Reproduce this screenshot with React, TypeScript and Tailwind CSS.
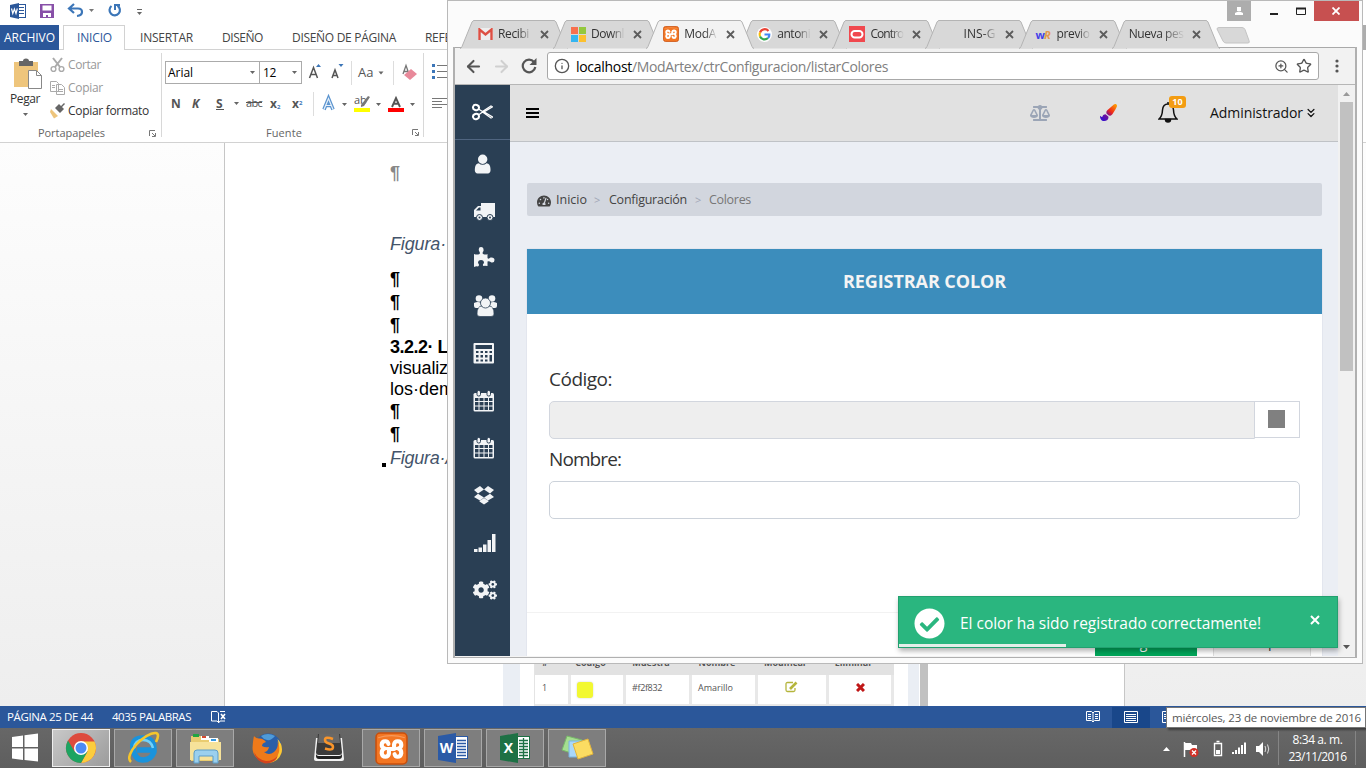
import React, { useLayoutEffect, useRef } from "react";
import { FaCogs, FaBalanceScale, FaTachometerAlt, FaCheckCircle, FaPaintBrush } from "react-icons/fa";
import { ArrowLeft, ArrowRight, ChevronsDown, ZoomIn, Star, Info } from "lucide-react";

/* One line of text whose tracking is tuned so that it fills w pixels. */
function T({ w, className = "", children }: { w: number; className?: string; children: string }) {
  const ref = useRef<HTMLSpanElement>(null);
  useLayoutEffect(() => {
    const el = ref.current;
    if (!el) return;
    el.style.letterSpacing = "0px";
    const natural = el.getBoundingClientRect().width;
    el.style.letterSpacing = (w - natural) / children.length + "px";
  }, [w, children]);
  return (
    <span ref={ref} className={"inline-block shrink-0 whitespace-pre " + className}>
      {children}
    </span>
  );
}

function Caret({ className = "" }: { className?: string }) {
  return (
    <svg className={"shrink-0 " + className} width="5" height="3" viewBox="0 0 5 3">
      <path d="M0 0h5L2.500 3z" fill="#666" />
    </svg>
  );
}

function Launcher({ className = "" }: { className?: string }) {
  return (
    <svg className={"shrink-0 " + className} width="7" height="7" viewBox="0 0 7 7" fill="none" stroke="#777">
      <path d="M.5 6V.5H6M3 3l3 3M6.500 3v3.500H3" />
    </svg>
  );
}

/* ---------- Word ---------- */

function QuickAccess() {
  return (
    <div className="flex h-[25px] shrink-0 items-start bg-white">
      <svg width="150" height="22" viewBox="0 0 150 22">
        <rect x="16.500" y="4.500" width="9" height="13" fill="#fff" stroke="#2b579a" />
        <path d="M19 7.500h5M19 10.500h5M19 13.500h5" stroke="#2b579a" />
        <path d="M10 5l9-2v16l-9-2z" fill="#2b579a" />
        <path d="M11.500 8.500l1.300 5 1.600-4.500 1.600 4.500 1.300-5" fill="none" stroke="#fff" strokeWidth="1.200" />
        <path d="M40 4h14v14H40z" fill="#8850a8" />
        <path d="M42.500 5.500h9v5h-9zM43 13h8v4h-3v-2h-2v2h-3z" fill="#fff" />
        <path d="M74 4l-5 4.500 5 4.500M70 8.500h8q4 0 4 3.500t-5 4" fill="none" stroke="#3c76b8" strokeWidth="2.200" />
        <path d="M89 9h5l-2.500 3z" fill="#777" />
        <path d="M111.500 6a5.200 5.200 0 1 0 6 -.3" fill="none" stroke="#3c76b8" strokeWidth="2.200" />
        <path d="M120 5h-5v5" fill="none" stroke="#3c76b8" strokeWidth="2" />
        <path d="M137 9.500h5" stroke="#666" />
        <path d="M137 12h5l-2.500 3z" fill="#666" />
      </svg>
    </div>
  );
}

function RibbonTabs() {
  return (
    <div className="flex h-[25px] shrink-0 items-stretch border-b border-[#d2d2d2] text-[12px] leading-[25px] text-[#444]">
      <div className="h-[25px] w-[59px] bg-[#2b579a] pl-1 text-white"><T w={51}>ARCHIVO</T></div>
      <div className="ml-1 h-[25px] w-[62px] border-x border-t border-[#d2d2d2] bg-white pl-[13px] leading-[24px] text-[#2b579a]"><T w={35}>INICIO</T></div>
      <T w={53} className="ml-[15px]">INSERTAR</T>
      <T w={41} className="ml-[29px]">DISEÑO</T>
      <T w={104} className="ml-[29px]">DISEÑO DE PÁGINA</T>
      <T w={72} className="ml-[29px]">REFERENCIAS</T>
    </div>
  );
}

function Clipboard() {
  return (
    <div className="flex h-full w-[161px] shrink-0 flex-col">
      <div className="flex h-[73px] text-[12px] text-[#444]">
        <div className="flex w-[50px] flex-col items-center">
          <svg width="32" height="32" viewBox="0 0 32 32" className="mt-[7px] ml-1">
            <path d="M3 5h24v25H3z" fill="#eec57c" />
            <path d="M8 4h4q0-2.500 3-2.500T18 4h4v5H8z" fill="#666" />
            <path d="M17.500 13.500h8l5 5v13h-13z" fill="#fff" stroke="#888" />
            <path d="M25.500 13.500v5h5" fill="none" stroke="#888" />
          </svg>
          <T w={30} className="leading-[20px] text-[#333]">Pegar</T>
          <Caret className="mt-[4px]" />
        </div>
        <div className="flex flex-col pt-[3px]">
          <div className="flex h-[23px] items-center gap-[3px] text-[#999]">
            <svg width="15" height="16" viewBox="0 0 15 16" fill="none" stroke="#aaa" strokeWidth="1.400">
              <path d="M3 1l7 9M12 1L5 10" strokeWidth="2" /><circle cx="3.500" cy="12" r="2.400" /><circle cx="11.500" cy="12" r="2.400" />
            </svg>
            <T w={33}>Cortar</T>
          </div>
          <div className="flex h-[23px] items-center gap-[3px] text-[#999]">
            <svg width="15" height="16" viewBox="0 0 15 16" fill="#fff" stroke="#aaa">
              <path d="M.5 1.500h6l2 2v8h-8zM6.500 4.500h5l3 3v7h-8z" /><path d="M2 5.500h3M2 7.500h3M8 9.500h5M8 11.500h5" />
            </svg>
            <T w={35}>Copiar</T>
          </div>
          <div className="flex h-[23px] items-center gap-[3px] text-[#333]">
            <svg width="15" height="16" viewBox="0 0 15 16">
              <path d="M1 6l7 7-4 2.500L0 9z" fill="#eec57c" /><path d="M5 5l5 5 4-4-2-2 3-3-1-1-3 3-2-2z" fill="#666" />
            </svg>
            <T w={81}>Copiar formato</T>
          </div>
        </div>
      </div>
      <div className="flex items-center pl-[38px] text-[11px] leading-[22px] text-[#666]">
        <T w={67}>Portapapeles</T>
        <Launcher className="ml-[44px]" />
      </div>
    </div>
  );
}

function FontGroup() {
  return (
    <div className="flex h-[84px] w-[263px] shrink-0 flex-col border-x border-[#d8d8d8] pl-[3px] text-[#555]">
      <div className="mt-[8px] flex h-[23px] shrink-0 items-center">
        <div className="flex h-[23px] w-[95px] shrink-0 items-center border border-[#ababab] bg-white pl-[2px] text-[12px] text-black">
          <T w={25}>Arial</T><Caret className="ml-auto mr-[4px]" />
        </div>
        <div className="-ml-px flex h-[23px] w-[43px] shrink-0 items-center border border-[#ababab] bg-white pl-[3px] text-[12px] text-black">
          <T w={13}>12</T><Caret className="ml-auto mr-[4px]" />
        </div>
        <svg width="121" height="24" viewBox="0 0 121 24" className="shrink-0">
          <g fill="none" stroke="#555" strokeWidth="1.500">
            <path d="M7.500 17l4-10.500 4 10.500M9 13.500h5.500M30 17l3-8 3 8M31 14.500h4" />
          </g>
          <path d="M14 6l2.500-3L19 6zM36.500 3h5L39 6z" fill="#3c76b8" />
          <path d="M49.500 0v24M91.500 0v24" stroke="#ddd" />
          <path d="M76.500 10.500h5l-2.500 3z" fill="#666" />
          <path d="M101 13l3-8.500 3 8.500M102 10.500h4" fill="none" stroke="#777" strokeWidth="1.300" />
          <path d="M102 14l7-6 6 5-7 6z" fill="#e8899a" />
          <text x="56" y="16" fontSize="13" fill="#555">Aa</text>
        </svg>
      </div>
      <div className="mt-[7px] flex h-[25px] shrink-0 items-center text-[12px]">
        <T w={11} className="ml-[6px] font-bold">N</T>
        <T w={9} className="ml-[10px] font-bold italic">K</T>
        <T w={8} className="ml-[15px] font-bold underline">S</T>
        <Caret className="ml-[10px]" />
        <T w={16} className="ml-[7px] text-[11px] line-through">abc</T>
        <span className="ml-[8px] w-[13px] shrink-0 font-bold">x<sub className="text-[6px] text-[#3c76b8]">2</sub></span>
        <span className="ml-[9px] w-[13px] shrink-0 font-bold">x<sup className="text-[6px] text-[#3c76b8]">2</sup></span>
        <svg width="106" height="26" viewBox="0 0 106 26" className="ml-[5px] shrink-0">
          <path d="M3.500 1v24" stroke="#ddd" />
          <path d="M14 18.500l4.500-11 4.500 11M16 14.500h5.500" fill="none" stroke="#5b94cf" strokeWidth="3.600" />
          <path d="M14 18.500l4.500-11 4.500 11M16 14.500h5.500" fill="none" stroke="#e6f0fa" strokeWidth="1.200" />
          <path d="M32 12h5l-2.500 3zM66 12h5l-2.500 3zM100 12h5l-2.500 3z" fill="#666" />
          <path d="M44 17h16v4H44z" fill="#ff0" />
          <text x="44" y="13" fontSize="11" fill="#555">ab</text>
          <path d="M60 6l-6 9-3 1v-2l7-9z" fill="#777" />
          <path d="M78 17h16v4H78z" fill="#f00" />
          <path d="M82 16l4-9 4 9M83.500 12.800h5" fill="none" stroke="#555" strokeWidth="1.900" />
        </svg>
      </div>
      <div className="mt-[8px] flex shrink-0 items-center pl-[101px] text-[11px] leading-[17px] text-[#666]">
        <T w={36}>Fuente</T><Launcher className="ml-[110px]" />
      </div>
    </div>
  );
}

function Ribbon() {
  return (
    <div className="flex h-[93px] shrink-0 items-start border-b border-[#d2d2d2] bg-white">
      <Clipboard />
      <div className="pt-[3px]"><FontGroup /></div>
      <svg width="24" height="92" viewBox="0 0 24 92">
        <path d="M8 14h3v3H8zM8 20h3v3H8zM8 26h3v3H8z" fill="#3c76b8" />
        <path d="M13 15.500h10M13 21.500h10M13 27.500h10M8 48.500h15M8 51.500h10M8 54.500h15M8 57.500h10" stroke="#777" />
      </svg>
    </div>
  );
}

const cell = "border-r-[3px] border-b-2 border-[#e8e8e8]";

function EmbeddedTable() {
  return (
    <div className="flex h-[56px] w-[426px] shrink-0 bg-white text-[9px] text-[#555]">
      <div className="w-[17px] shrink-0 bg-[#eaeef4]" />
      <div className="ml-[14px] grid w-[360px] shrink-0 grid-cols-[36px_55px_66px_66px_71px_65px] grid-rows-[25px_31px] border-l border-[#e4e4e4]">
        {["#", "Código", "Muestra", "Nombre", "Modificar", "Eliminar"].map((h) => (
          <div key={h} className="bg-[#e2e2e2] pt-[7px] pr-[16px] text-center text-[9px] leading-[12px] font-bold">{h}</div>
        ))}
        <div className={cell + " pt-[5px] pl-[7px]"}>1</div>
        <div className={cell + " pt-[7px] pl-[6px]"}><div className="h-4 w-4 rounded-[3px] bg-[#f2f832] shadow-[0_0_2px_#ccc]" /></div>
        <div className={cell + " pt-[5px] pl-[6px]"}><T w={30}>#f2f832</T></div>
        <div className={cell + " pt-[5px] pl-[6px]"}><T w={35}>Amarillo</T></div>
        <div className={cell + " pt-[6px] pl-[27px]"}>
          <svg width="13" height="12" viewBox="0 0 13 12" fill="none" stroke="#b5b53c" strokeWidth="1.300">
            <path d="M8 1.500H2.500q-1.500 0-1.500 1.500v6q0 1.500 1.500 1.500h6q1.500 0 1.500-1.500V7" /><path d="M5 8l6.500-6.500" strokeWidth="2.600" />
          </svg>
        </div>
        <div className={cell + " pt-[8px] pl-[27px]"}>
          <svg width="9" height="9" viewBox="0 0 9 9" stroke="#c01818" strokeWidth="3"><path d="M1 1l7 7M8 1L1 8" /></svg>
        </div>
      </div>
      <div className="ml-[14px] w-[11px] shrink-0 bg-[#eaeef4]" />
      <div className="ml-px w-[8px] shrink-0 bg-[#c1c1c1]" />
    </div>
  );
}

function WordDocument() {
  return (
    <div className="flex h-[563px] shrink-0 bg-[linear-gradient(#fdfdfd,#eeeeee)]">
      <div className="relative ml-[224px] flex w-[901px] flex-col border-x border-[#c6c6c6] bg-white pl-[165px] font-['Liberation_Sans',sans-serif] text-[18px] leading-[22px] text-black">
        <p className="mt-[19px] font-bold text-[#888]">¶</p>
        <p className="mt-[49px] text-[#44546a] italic"><T w={56}>Figura·</T></p>
        <p className="mt-[13px] leading-[23px] font-bold">¶</p>
        <p className="leading-[23px] font-bold">¶</p>
        <p className="leading-[23px] font-bold">¶</p>
        <p className="leading-[21px] font-bold"><T w={58}>3.2.2· L</T></p>
        <p className="leading-[21px]"><T w={58}>visualiz</T></p>
        <p className="leading-[21px]"><T w={64}>los·dem</T></p>
        <p className="leading-[23px] font-bold">¶</p>
        <p className="leading-[23px] font-bold">¶</p>
        <p className="mt-px text-[#44546a] italic"><T w={67}>Figura·A</T></p>
        <div className="absolute top-[320px] left-[157px] h-[4px] w-[4px] bg-black" />
        <div className="mt-auto ml-[113px] font-['Open_Sans',sans-serif] leading-[16px]"><EmbeddedTable /></div>
      </div>
    </div>
  );
}

function WordStatus() {
  return (
    <div className="flex h-[22px] shrink-0 items-center bg-[#2b579a] pl-[7px] text-[11.500px] text-white">
      <T w={86}>PÁGINA 25 DE 44</T>
      <T w={79} className="ml-[19px]">4035 PALABRAS</T>
      <svg width="16" height="14" viewBox="0 0 16 14" className="ml-[20px] shrink-0" fill="none" stroke="#fff">
        <path d="M7.500 12.500L6 11H.5V1.500H6l1.500 1.500v10L9 11h5M9 1.500h5" /><path d="M10 4l4 5M14 4l-4 5" strokeWidth="1.600" />
      </svg>
      <svg width="14" height="12" viewBox="0 0 14 12" className="ml-[859px] shrink-0" fill="none" stroke="#fff">
        <path d="M.5.5h5L7 2l1.500-1.500h5v9h-5L7 11 5.500 9.500h-5zM7 2v9M2 3.500h3M2 5.500h3M2 7.500h3M9 3.500h3M9 5.500h3M9 7.500h3" />
      </svg>
      <div className="ml-[12px] flex h-[21px] w-[38px] shrink-0 items-center justify-center bg-[#19478a]">
        <svg width="14" height="12" viewBox="0 0 14 12" fill="none" stroke="#fff"><path d="M.5.500h13v11H.5zM2 3.500h10M2 5.500h10M2 7.500h10M2 9.500h10" /></svg>
      </div>
      <svg width="14" height="12" viewBox="0 0 14 12" className="ml-[12px] shrink-0" fill="none" stroke="#fff"><path d="M.5.500h13v11H.5zM2 3.500h10M2 5.500h10M2 7.500h10" /></svg>
    </div>
  );
}

/* ---------- Taskbar ---------- */

function TaskButton({ active = false, plain = false, children }: { active?: boolean; plain?: boolean; children: React.ReactNode }) {
  const look = plain
    ? ""
    : active
      ? "border border-[#eeeeee] bg-[linear-gradient(135deg,#c8c8c8,#9c9c9c)]"
      : "border border-[#a8a8a8] bg-[#7e7e7e]";
  return <div className={"flex h-[38px] w-[58px] shrink-0 items-center justify-center " + look}>{children}</div>;
}

function OfficeIcon({ letter, color, cells }: { letter: string; color: string; cells: string }) {
  return (
    <svg width="32" height="32" viewBox="0 0 32 32">
      <rect x="16.500" y="4.500" width="14" height="22" fill="#fff" stroke={color} />
      <path d={cells} stroke={color} strokeWidth="1.300" />
      <path d="M1 4l18-3v30L1 28z" fill={color} />
      <text x="9.500" y="21" textAnchor="middle" fontSize="14" fontWeight="bold" fill="#fff">{letter}</text>
    </svg>
  );
}

function Xampp({ size }: { size: number }) {
  return (
    <svg width={size} height={size} viewBox="0 0 32 32" className="shrink-0">
      <rect x="1" y="1" width="30" height="30" rx="4" fill="#f37623" stroke="#c94f0c" strokeWidth="1.500" />
      <path d="M3 5q13-4 26 0v1q-13-4-26 0z" fill="#fbb380" opacity=".6" />
      <g fill="none" stroke="#fff" strokeWidth="4" strokeLinecap="round">
        <path d="M13 11.500Q12.500 9 10 9 6.500 9 6.500 12.500 6.500 15 9 16 6.500 17 6.500 20.500 7 24 10 24 13 24 13.500 21V16.500H18.500" />
        <path d="M18.500 16V12Q19 9 22 9 25.500 9 25.500 12.500 25.500 15 23 16 25.500 17 25.500 20.500 25 24 22 24 19.500 24 19 21.500" />
      </g>
    </svg>
  );
}

function Taskbar() {
  return (
    <div className="flex h-[40px] shrink-0 items-center bg-[linear-gradient(#676767,#5e5e5e)] text-white">
      <svg width="52" height="38" viewBox="0 0 52 38" fill="#fff" className="shrink-0">
        <path d="M12 8l11-1.500V18H12zM24.500 6.300L38 4.500V18H24.500zM12 19.500h11V31l-11-1.500zM24.500 19.500H38v13l-13.500-1.500z" />
      </svg>
      <div className="flex shrink-0 gap-[4px]">
        <TaskButton active>
          <svg width="32" height="32" viewBox="0 0 32 32">
            <circle cx="16" cy="16" r="15" fill="#dd4b3e" />
            <path d="M16 31A15 15 0 0 0 29.500 9.500H16l6.500 10z" fill="#fccd3d" />
            <path d="M3 8.500A15 15 0 0 0 16 31l6.500-11.500H9.500z" fill="#1da462" />
            <circle cx="16" cy="16" r="7" fill="#fff" /><circle cx="16" cy="16" r="5.500" fill="#4c8bf5" />
          </svg>
        </TaskButton>
        <TaskButton>
          <svg width="34" height="34" viewBox="0 0 34 34" fill="none">
            <path d="M28 21q-3 8-11 8T7 18 17 7q11 0 11 12H11" stroke="#1a93dc" strokeWidth="5.500" />
            <path d="M27 17q-2-8-10-8t-9 8" stroke="#72d2fa" strokeWidth="2.500" />
            <path d="M5 31C-3 24 19 1 30 2q4 1 0 9" stroke="#f5c52c" strokeWidth="2.600" />
          </svg>
        </TaskButton>
        <TaskButton>
          <svg width="34" height="34" viewBox="0 0 34 34">
            <path d="M3 5h10l2 3h16v22H3z" fill="#e9cc70" /><path d="M5 3h6v3H5z" fill="#21a541" /><path d="M13 5h8v4h-8z" fill="#fff" /><path d="M14 5h4v2h-4z" fill="#d54a32" />
            <path d="M21 7h9v4h-9z" fill="#fff" /><path d="M23 8h5v2h-5z" fill="#3799e0" /><path d="M2 11h31v18H2z" fill="#f6e29a" />
            <path d="M6 32V22q0-3 3-3h18q3 0 3 3v10h-5v-7H11v7z" fill="#9bd0ee" stroke="#5c9dc8" />
          </svg>
        </TaskButton>
        <TaskButton plain>
          <svg width="32" height="32" viewBox="0 0 32 32">
            <circle cx="17" cy="15" r="13.500" fill="#2a5fa8" />
            <path d="M10 4q7-4 14 0-4 5-8 4t-6-4z" fill="#4f9bd8" />
            <path d="M3 4q2 2.500 5 2.500 4-.5 7 3.500-4 1-4 4 3 2 7 1-1 5-5 5 5 4 10 0 5-4 3.500-11Q29 13 29.500 18q-1 8-8 11.500T8 28 1.500 16Q2 8 3 4z" fill="#ef7a1a" />
            <path d="M26.500 7q6 6 4 14-3 9-13 10 9-4 10.500-11 1-6-1.500-13z" fill="#ffc933" />
            <path d="M3 20q4 8 12 9 8 0 12-6-2 8-12 8.500Q5 30 3 20z" fill="#d4431c" />
          </svg>
        </TaskButton>
        <TaskButton plain>
          <svg width="32" height="32" viewBox="0 0 32 32">
            <path d="M3 6L1 27q0 2 2 2h26q2 0 2-2L29 6z" fill="#f2f2f2" />
            <path d="M5 2h22l2 18q0 3-3 3H6q-3 0-3-3z" fill="#3b3b3b" /><path d="M6 2h20l1 9H5z" fill="#686868" /><path d="M3 21q0 3 3 3h20q3 0 3-3v3q0 3-3 3H6q-3 0-3-3z" fill="#222" />
            <path d="M20 7q-8-3-8 1 0 2.500 4 3.500t4 3.500q0 4-8 1.500" fill="none" stroke="#f9952b" strokeWidth="2.500" />
          </svg>
        </TaskButton>
        <TaskButton><Xampp size={33} /></TaskButton>
        <TaskButton><OfficeIcon letter="W" color="#2b5aa6" cells="M20 8.500h9M20 11.500h9M20 14.500h9M20 17.500h9M20 20.500h9M20 23.500h9" /></TaskButton>
        <TaskButton><OfficeIcon letter="X" color="#1e7145" cells="M20 8.500h9M20 11.500h9M20 14.500h9M20 17.500h9M20 20.500h9M20 23.500h9M24.500 6v20" /></TaskButton>
        <TaskButton>
          <svg width="34" height="30" viewBox="0 0 34 30">
            <path d="M7 3l15 4-5 15-15-5z" fill="#a5de91" stroke="#79b969" /><path d="M9 8h14v16H9z" fill="#a9d7fa" stroke="#79b3de" /><path d="M13 11l15-5 5 15-15 5z" fill="#fbdc62" stroke="#e2b43c" />
          </svg>
        </TaskButton>
      </div>
      <svg width="112" height="24" viewBox="0 0 112 24" className="mt-[3px] ml-[556px] shrink-0">
        <path d="M1 13l3.500-4L8 13z" fill="#fff" />
        <path d="M22.500 4v15" stroke="#fff" strokeWidth="1.500" /><path d="M23 5h6l1 2h5v7h-6l-1-2h-5z" fill="#fff" /><circle cx="32" cy="14.500" r="4.500" fill="#d03027" /><path d="M30 12.500l4 4M34 12.500l-4 4" stroke="#fff" strokeWidth="1.300" />
        <path d="M52.500 5.500h7v12h-7zM54.500 3.500h3" fill="none" stroke="#fff" strokeWidth="1.400" /><path d="M54 12h4v4h-4z" fill="#fff" />
        <path d="M70 14h2v2h-2zM73 12h2v4h-2zM76 9.500h2V16h-2zM79 7h2v9h-2zM82 4.500h2V16h-2z" fill="#fff" />
        <path d="M94 8h3l4-4v14l-4-4h-3z" fill="#fff" /><path d="M103 8q1.500 3 0 6M105.500 6.500q2.500 4.500 0 9" fill="none" stroke="#ddd" />
      </svg>
      <div className="ml-[4px] flex h-[34px] w-[78px] shrink-0 flex-col items-center border-x border-[#858585] pl-px text-[12px] leading-[17px]">
        <T w={50}>8:34 a. m.</T><T w={58}>23/11/2016</T>
      </div>
    </div>
  );
}

/* ---------- Chrome ---------- */

type Tab = { title: string; w: number; icon: React.ReactNode; active?: boolean };

const tabs: Tab[] = [
  { title: "Recibi", w: 31, icon: <svg width="15" height="12" viewBox="0 0 15 12"><path d="M0 0h15v12H0z" fill="#eee" /><path d="M1.500 12V1.500l6 5 6-5V12" fill="none" stroke="#dd4f43" strokeWidth="2.400" /></svg> },
  { title: "Downl", w: 33, icon: <svg width="15" height="15" viewBox="0 0 15 15"><path d="M0 0h7v7H0z" fill="#f8704e" /><path d="M8 0h7v7H8z" fill="#94c83d" /><path d="M0 8h7v7H0z" fill="#35b5f0" /><path d="M8 8h7v7H8z" fill="#fcc02e" /></svg> },
  { title: "ModA", w: 32, icon: <Xampp size={16} />, active: true },
  { title: "antoni", w: 33, icon: <svg width="15" height="15" viewBox="0 0 15 15"><circle cx="7.500" cy="7.500" r="7.500" fill="#fff" /><g fill="none" strokeWidth="2.200"><path d="M11.500 4A5 5 0 0 0 3 5.500" stroke="#ea4335" /><path d="M3 5.500a5 5 0 0 0 0 4" stroke="#fbbc05" /><path d="M3 9.500a5 5 0 0 0 8 1.500" stroke="#34a853" /><path d="M11 11q1.500-1.500 1.300-3.500H7.500" stroke="#4285f4" /></g></svg> },
  { title: "Contro", w: 33, icon: <svg width="16" height="16" viewBox="0 0 16 16"><path d="M0 0h16v16H0z" fill="#f0484e" /><rect x="2.500" y="5" width="11" height="6.500" rx="3.200" fill="none" stroke="#fff" strokeWidth="2" /></svg> },
  { title: "INS-G", w: 32, icon: <span className="block w-[16px]" /> },
  { title: "previo", w: 33, icon: <span className="block w-[16px] text-[11px] leading-[15px] font-bold tracking-[-1px] text-[#4340e8]">w<span className="text-[#e4984c] italic">R</span></span> },
  { title: "Nueva pes", w: 55, icon: null },
];

function ChromeTab({ tab }: { tab: Tab }) {
  return (
    <div className={"relative -mr-[14px] h-[29px] w-[107.100px] shrink-0 " + (tab.active ? "z-10" : "")}>
      <svg className="absolute inset-0" width="108" height="29" viewBox="0 0 108 29">
        <path d="M0 28.500q1 0 2-2L12 2q1-1.500 2-1.500h80q1 0 2 1.500l10 24.500q1 2 2 2" fill={tab.active ? "#f2f2f2" : "#d8d8d8"} stroke="#b4b4b4" />
        {tab.active && <path d="M2 28.500h104" stroke="#f2f2f2" />}
      </svg>
      <div className="relative flex h-[28px] items-center pl-[17px]">
        {tab.icon && <div className="mr-[5px] flex w-[16px] justify-center">{tab.icon}</div>}
        <div className={"overflow-hidden text-[12px] text-[#333] [mask-image:linear-gradient(90deg,#000_60%,transparent)] " + (tab.icon ? "w-[34px]" : "w-[56px]")}><T w={tab.w}>{tab.title}</T></div>
        <svg className={tab.icon ? "ml-[8px]" : "ml-[7px]"} width="9" height="9" viewBox="0 0 9 9" stroke="#5c5c5c" strokeWidth="1.800"><path d="M1 1l7 7M8 1L1 8" /></svg>
      </div>
    </div>
  );
}

function ChromeFrameTop() {
  return (
    <div className="flex h-[48px] w-[914px] shrink-0 items-end">
      <div className="flex shrink-0 pl-[12px]">
        {tabs.map((t) => <ChromeTab key={t.title} tab={t} />)}
      </div>
      <svg width="36" height="20" viewBox="0 0 36 20" className="mb-[3px] ml-[11px] shrink-0"><path d="M1 3q0-1.500 2-1.500h23q2 0 3 2l4 11q1 2.500-1 2.500H10q-2 0-3-2z" fill="#d8d8d8" stroke="#c4c4c4" /></svg>
      <div className="flex h-[48px] items-start">
        <div className="-ml-[25px] flex h-[20px] w-[24px] items-center justify-center bg-[#adadad]"><svg width="10" height="9" viewBox="0 0 10 9" fill="#fff"><path d="M3 0h4v4H3zM1 6q4-3 8 0v2H1z" /></svg></div>
        <svg width="55" height="20" viewBox="0 0 55 20" className="ml-[8px] shrink-0" fill="none" stroke="#222"><path d="M11 13h8" strokeWidth="2" /><path d="M37.500 7.500h9v6h-9z" /><path d="M37 7.500h10" strokeWidth="2" /></svg>
        <div className="flex h-[20px] w-[45px] shrink-0 items-center justify-center bg-[#c75050]"><svg width="8" height="8" viewBox="0 0 8 8" stroke="#fff" strokeWidth="1.800"><path d="M.5.500l7 7M7.500.500l-7 7" /></svg></div>
      </div>
    </div>
  );
}

function AddressBar() {
  return (
    <div className="flex h-[38px] shrink-0 items-center border-t border-b border-[#a9a9a9] border-b-[#b6b6b6] bg-[#f2f2f2] pl-[9px] text-[#555]">
      <ArrowLeft size={19} strokeWidth={2.600} />
      <ArrowRight size={19} strokeWidth={2.600} className="ml-[9px] text-[#d0d0d0]" />
      <svg width="16" height="16" viewBox="0 0 16 16" className="ml-[10px]" fill="none" stroke="#555" strokeWidth="2.200"><path d="M13 4a6.300 6.300 0 1 0 1.300 5" /><path d="M15.500 0v7h-7z" fill="#555" stroke="none" /></svg>
      <div className="ml-[10px] flex h-[28px] w-[772px] items-center rounded-[3px] border border-[#a8a8a8] bg-white px-[6px]">
        <Info size={16} strokeWidth={2} />
        <T w={56} className="ml-[6px] text-[14px] text-black">localhost</T>
        <T w={256} className="text-[14px] text-[#808080]">/ModArtex/ctrConfiguracion/listarColores</T>
        <ZoomIn size={15} className="ml-auto" />
        <Star size={16} className="ml-[7px]" />
      </div>
      <svg width="4" height="14" viewBox="0 0 4 14" className="ml-[16px]" fill="#555"><circle cx="2" cy="2" r="1.600" /><circle cx="2" cy="7" r="1.600" /><circle cx="2" cy="12" r="1.600" /></svg>
    </div>
  );
}

const calendar = (
  <svg width="22" height="22" viewBox="0 0 22 22"><rect x="0.500" y="3" width="20.500" height="18.500" rx="1.500" fill="#f2f4f6" /><path d="M2 8h3.500v3H2zM6.500 8h4v3h-4zM11.500 8h3.500v3h-3.500zM16 8h3.500v3H16zM2 12h3.500v3.500H2zM6.500 12h4v3.500h-4zM11.500 12h3.500v3.500h-3.500zM16 12h3.500v3.500H16zM2 16.500h3.500v3.500H2zM6.500 16.500h4v3.500h-4zM11.500 16.500h3.500v3.500h-3.500zM16 16.500h3.500v3.500H16z" fill="#2a3f54" /><rect x="4" y=".5" width="3.500" height="5.500" rx="1.500" fill="#f2f4f6" stroke="#2a3f54" /><rect x="14" y=".5" width="3.500" height="5.500" rx="1.500" fill="#f2f4f6" stroke="#2a3f54" /></svg>
);

const menu: React.ReactNode[] = [
  <svg key="user" width="22" height="22" viewBox="128 0 1792 1792" fill="#f2f4f6"><path d="M1536 1399q0 109-62.500 187t-150.500 78h-854q-88 0-150.500-78t-62.500-187q0-85 8.500-160.500t31.500-152 58.500-131 94-89 134.500-34.500q131 128 313 128t313-128q76 0 134.500 34.500t94 89 58.500 131 31.500 152 8.500 160.500zm-256-887q0 159-112.500 271.500t-271.500 112.500-271.500-112.500-112.500-271.500 112.500-271.500 271.500-112.500 271.500 112.500 112.500 271.500z" transform="translate(20)" /></svg>,
  <svg key="truck" width="24" height="22" viewBox="0 0 24 22" fill="#f2f4f6"><path d="M8 3h14v14H1v-7l4-4h3z" /><path d="M3 10.500l3-3h1.500v3z" fill="#2a3f54" /><circle cx="6.500" cy="17.500" r="3" stroke="#2a3f54" /><circle cx="17" cy="17.500" r="3" stroke="#2a3f54" /><circle cx="6.500" cy="17.500" r="1" fill="#2a3f54" /><circle cx="17" cy="17.500" r="1" fill="#2a3f54" /></svg>,
  <svg key="puzzle" width="22" height="22" viewBox="0 0 22 22" fill="#f2f4f6"><path d="M1 7q3 1 5.500 0 1-1-.5-3-1-4 2-4t2.500 4q-1.500 2-.5 3 3 1 4.500 0v4q1 1.500 3-.5 4-.5 4 2.500t-3 2.500q-3-2-4-1v4.500q-3-.5-4 0-1.500-1 .5-3 0-3-3-3t-3 3q2 2 0 3.500-2-.5-4 .5z" /></svg>,
  <svg key="users" width="25" height="22" viewBox="0 0 25 22" fill="#f2f4f6"><circle cx="6" cy="3.500" r="3.300" /><circle cx="19" cy="3.500" r="3.300" /><path d="M1 8q4-2 7 0v5H3q-2 0-2-2zM24 8q-4-2-7 0v5h5q2 0 2-2z" /><path d="M4 19q0-8 5-8h7q5 0 5 8 0 2.500-3 2.500H7q-3 0-3-2.500z" stroke="#2a3f54" strokeWidth=".7" /><circle cx="12.500" cy="8" r="5" stroke="#2a3f54" strokeWidth=".8" /></svg>,
  <svg key="calc" width="22" height="22" viewBox="0 0 22 22"><rect x="0.500" y="1" width="20.500" height="20.500" rx="1" fill="#f2f4f6" /><path d="M2.500 3h16.500v4H2.500zM3 9h2.500v2H3zM7.500 9h2.500v2H7.500zM12 9h2.500v2H12zM16.500 9h2.500v2h-2.500zM3 13h2.500v2.500H3zM7.500 13h2.500v2.500H7.500zM12 13h2.500v2.500H12zM16.500 13h2.500v6.500h-2.500zM3 17.500h2.500v2H3zM7.500 17.500h2.500v2H7.500zM12 17.500h2.500v2H12z" fill="#2a3f54" /></svg>,
  React.cloneElement(calendar, { key: "cal1" }),
  React.cloneElement(calendar, { key: "cal2" }),
  <svg key="dropbox" width="22" height="20" viewBox="0 0 22 20" fill="#f2f4f6"><path d="M7 1l4 3.500-6 4L1 5zM15 1l6 4-4 3.500-6-4zM5 8.700l6 3.800-4 3L1 12zM17 8.700l4 3.300-6 3.500-4-3zM11 13l4.500 3v.5L11 19.500l-4.500-3V16z" /></svg>,
  <svg key="signal" width="24" height="22" viewBox="0 0 24 22" fill="#f2f4f6"><path d="M1 17h3.500v3H1zM5.500 15.500H9V20H5.500zM10 12.500h3.500V20H10zM14.500 8H18v12h-3.500zM19 2H22.500v18H19z" /></svg>,
  <FaCogs key="cogs" size={24} />,
];

function Sidebar() {
  return (
    <div className="flex w-[55px] shrink-0 flex-col bg-[#2a3f54] text-[#f2f4f6]">
      <div className="flex h-[55px] shrink-0 items-center border-b border-[#506580] pl-[16px]">
        <svg width="22" height="18" viewBox="0 0 22 18" fill="none" stroke="#fff"><ellipse cx="5" cy="4.500" rx="3" ry="2.600" strokeWidth="2" transform="rotate(20 5 4.500)" /><ellipse cx="5" cy="13.500" rx="3" ry="2.600" strokeWidth="2" transform="rotate(-20 5 13.500)" /><path d="M7.500 6l4 2.500L20 3l1.500.8-9 5.500M7.500 12l4-3 8.500 6 1.500-1-9-5.500" strokeWidth="1.200" /></svg>
      </div>
      {menu.map((icon, i) => (
        <div key={i} className="flex h-[47.400px] shrink-0 items-center pl-[18px]">{icon}</div>
      ))}
    </div>
  );
}

function AppHeader() {
  return (
    <div className="flex h-[57px] shrink-0 items-center border-b border-[#bfc2c6] bg-[#e1e1e1] pb-px">
      <svg width="14" height="12" viewBox="0 0 14 12" className="ml-[16px] shrink-0" stroke="#000" strokeWidth="2"><path d="M0 2h13M0 6h13M0 10h13" /></svg>
      <FaBalanceScale size={20} className="ml-[490px] shrink-0 text-[#9ba5b6]" />
      <svg width="0" height="0"><defs><linearGradient id="brush" x1="0" y1="1" x2="1" y2="0"><stop offset="0" stopColor="#2010e0" /><stop offset=".4" stopColor="#7a1090" /><stop offset=".6" stopColor="#f02818" /><stop offset="1" stopColor="#ffb000" /></linearGradient></defs></svg>
      <FaPaintBrush size={17} className="ml-[50px] shrink-0 [&_path]:fill-[url(#brush)]" />
      <div className="relative ml-[41px]">
        <svg width="20" height="22" viewBox="0 0 20 22" fill="none" stroke="#111" strokeWidth="1.500"><path d="M10 2q-5 0-5.500 6-.2 6-3.500 9h18q-3.300-3-3.500-9Q15 2 10 2zM10 0v2" /><path d="M7.500 17.500a2.500 2.500 0 0 0 5 0z" fill="#111" /></svg>
        <div className="absolute -top-[6px] left-[11px] h-[12px] w-[17px] rounded-[3px] bg-[#f39c12] text-center text-[9px] leading-[12px] font-bold text-white">10</div>
      </div>
      <T w={93} className="ml-[32px] text-[14px] text-[#111]">Administrador</T>
      <ChevronsDown size={14} strokeWidth={2.200} className="ml-px text-[#111]" />
    </div>
  );
}

function FormPage() {
  return (
    <div className="flex h-[514px] flex-col overflow-hidden bg-[#ebeef4] pr-[16px] pl-[17px]">
      <div className="mt-[41px] flex h-[33px] shrink-0 items-center rounded-[2px] bg-[#d2d6de] pt-[2px] pl-[10px] text-[12.500px] text-[#444]">
        <FaTachometerAlt size={14} />
        <T w={31} className="ml-[5px]">Inicio</T>
        <T w={8} className="ml-[7px] text-[11px] text-[#a0a5b5]">&gt;</T>
        <T w={78} className="ml-[7px]">Configuración</T>
        <T w={8} className="ml-[8px] text-[11px] text-[#a0a5b5]">&gt;</T>
        <T w={42} className="ml-[6px] text-[#777]">Colores</T>
      </div>
      <div className="mt-[33px] flex grow flex-col bg-white shadow-[0_0_1px_#bbc]">
        <div className="flex h-[65px] shrink-0 items-center justify-center bg-[#3c8dbc] text-[18px] font-bold text-[#f4f4f4]"><T w={163}>REGISTRAR COLOR</T></div>
        <div className="h-[299px] shrink-0 border-b border-[#f2f2f2] px-[22px] pt-[51px] text-[19px] text-[#333]">
          <div className="h-[36px] leading-[28px]"><T w={63}>Código:</T></div>
          <div className="flex items-start">
            <div className="h-[38px] w-[706px] shrink-0 rounded-l-[5px] border border-[#d2d6de] bg-[#eee]" />
            <div className="-ml-px flex h-[37px] grow items-center justify-center border border-[#d2d6de] bg-white"><div className="mr-[2px] mb-px h-[18px] w-[17px] bg-[#808080]" /></div>
          </div>
          <div className="mt-[6px] h-[36px] leading-[28px]"><T w={72}>Nombre:</T></div>
          <div className="h-[38px] rounded-[5px] border border-[#ccd2da] bg-white" />
        </div>
        <div className="flex justify-end gap-[16px] pt-[15px] pr-[11px] text-[14px]">
          <div className="h-[40px] w-[102px] bg-[#00a65a] text-center leading-[30px] text-white"><T w={60} className="ml-[14px]">Registrar</T></div>
          <div className="h-[40px] w-[98px] border border-[#ddd] bg-[#f4f4f4] text-center leading-[26px] text-[#444]"><T w={50} className="ml-[14px]">Limpiar</T></div>
        </div>
      </div>
    </div>
  );
}

function Scrollbar() {
  return (
    <div className="flex w-[18px] shrink-0 flex-col items-center bg-[#f1f1f1] pr-[2px]">
      <svg width="7" height="4" viewBox="0 0 7 4" className="mt-[7px]" fill="#999"><path d="M0 4l3.500-4L7 4z" /></svg>
      <div className="mt-[6px] h-[269px] w-[13px] bg-[#c1c1c1]" />
      <svg width="7" height="4" viewBox="0 0 7 4" className="mt-auto mb-[7px]" fill="#555"><path d="M0 0h7L3.500 4z" /></svg>
    </div>
  );
}

function Toast() {
  return (
    <div className="absolute top-[595px] left-[450px] z-20 flex h-[52px] w-[440px] items-start border border-[#22a06f] bg-[#2ab67f] text-white shadow-[1px_3px_5px_rgba(0,0,0,.3)]">
      <FaCheckCircle size={31} className="mt-[11px] ml-[15px] shrink-0" />
      <T w={301} className="mt-[15px] ml-[15px] text-[15.500px] leading-[22px]">El color ha sido registrado correctamente!</T>
      <svg width="10" height="10" viewBox="0 0 10 10" className="mt-[18px] ml-[49px] shrink-0" stroke="#fff" strokeWidth="2"><path d="M1 1l8 8M9 1L1 9" /></svg>
      <div className="absolute bottom-0 left-0 h-[3px] w-[167px] bg-[#e4eee9]" />
    </div>
  );
}

function ChromeWindow() {
  return (
    <div className="absolute top-0 left-[447px] flex h-[664px] w-[916px] flex-col border border-[#b9b9b9] bg-[#fbfbfb]">
      <ChromeFrameTop />
      <div className="-mt-[2px] ml-[5px] flex h-[611px] w-[904px] shrink-0 flex-col border-x-2 border-b border-[#b0b0b0] bg-[#f4f4f4]">
        <AddressBar />
        <div className="flex h-[571px] shrink-0 overflow-hidden">
          <Sidebar />
          <div className="flex w-[828px] shrink-0 flex-col"><AppHeader /><FormPage /></div>
          <Scrollbar />
        </div>
      </div>
      <Toast />
    </div>
  );
}

export default function App() {
  return (
    <div className="relative h-[768px] w-[1366px] overflow-hidden bg-white font-['Open_Sans','Noto_Sans',sans-serif]">
      <div className="flex h-full flex-col">
        <QuickAccess />
        <RibbonTabs />
        <Ribbon />
        <WordDocument />
        <WordStatus />
        <Taskbar />
      </div>
      <div className="absolute top-[25px] right-0 h-[25px] w-[3px] bg-[#adadad]" />
      <ChromeWindow />
      <div className="absolute top-[707px] right-0 flex h-[21px] w-[200px] items-center border border-[#767676] bg-white pl-[5px] text-[11.500px] text-[#575757] shadow-[2px_2px_2px_rgba(0,0,0,.4)]">
        <T w={189}>miércoles, 23 de noviembre de 2016</T>
      </div>
    </div>
  );
}
